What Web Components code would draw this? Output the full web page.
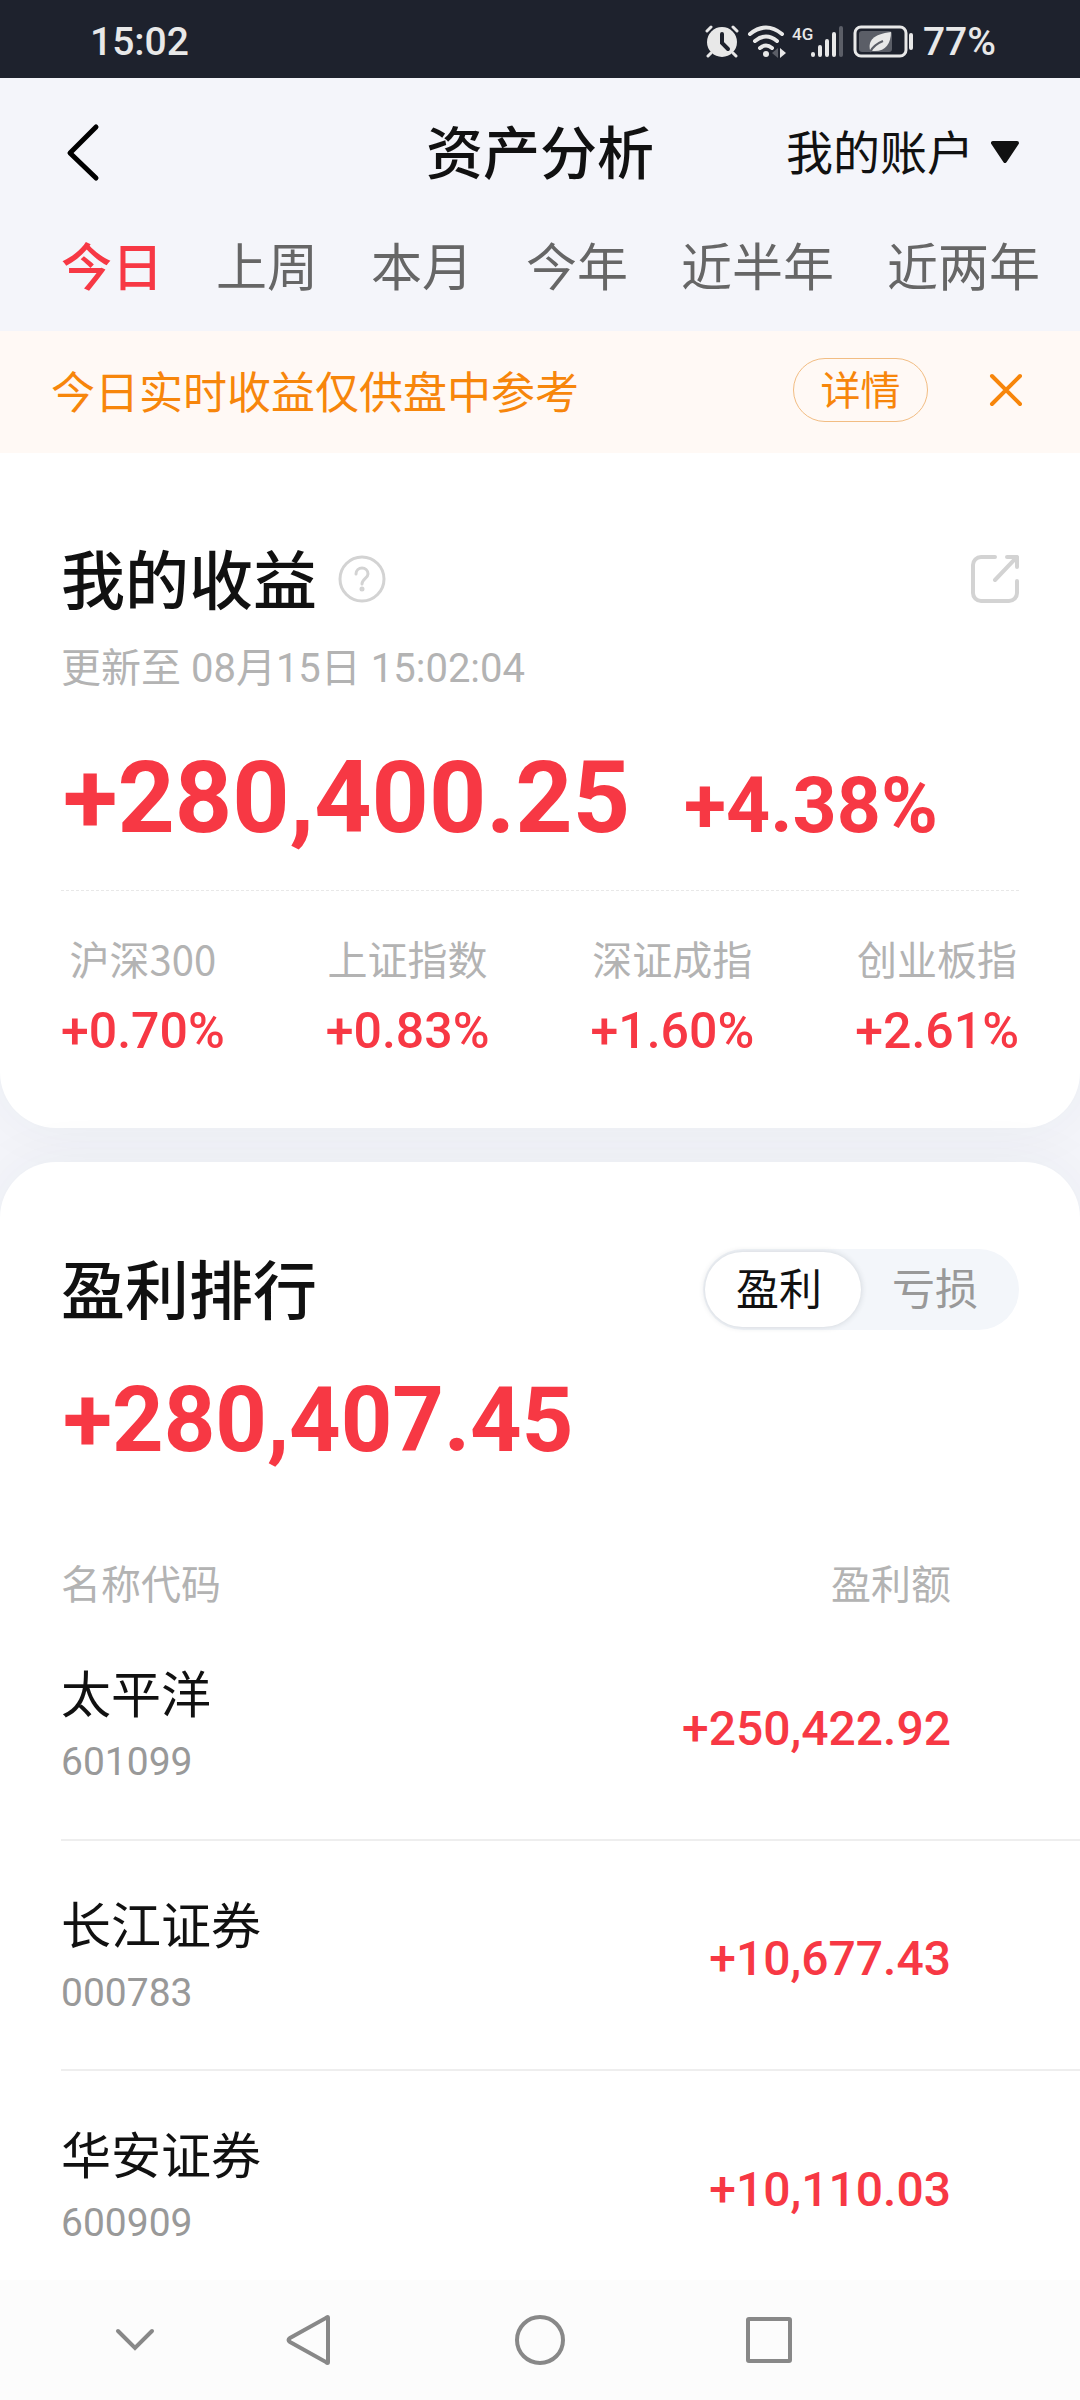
<!DOCTYPE html>
<html lang="zh-CN">
<head>
  <meta charset="utf-8">
  <meta name="viewport" content="width=device-width, initial-scale=1">
  <title>资产分析</title>
  <style>
    :root {
      --page: #f4f5fa;
      --ink: #111;
      --muted: #666;
      --light: #b3b3b3;
      --red: #f73844;
      --orange: #f7860b;
      --side: 61px;
      --num: Roboto, "Noto Sans CJK SC", sans-serif;
      --text: "Noto Sans CJK SC", sans-serif;
    }
    body {
      margin: 0;
      background: var(--page);
      color: var(--ink);
      font-family: var(--text);
    }
  </style>
</head>
<body>
  <asset-page></asset-page>

  <script>
    class StatusBar extends HTMLElement {
      constructor() {
        super();
        this.attachShadow({ mode: 'open' });
      }

      connectedCallback() {
        this.shadowRoot.innerHTML = `
          <style>
            :host {
              display: flex;
              align-items: center;
              justify-content: space-between;
              flex: none;
              height: 78px;
              padding: 5px 84px 0 90px;
              box-sizing: border-box;
              background: #1e222d;
              color: #e8e8e8;
              font: 500 39px/48px var(--num);
            }
            .icons { display: flex; align-items: center; gap: 8px; }
            svg { display: block; }
          </style>
          <span>${this.getAttribute('time')}</span>
          <div class="icons">
            <svg width="140" height="34" viewBox="0 0 140 34" fill="none" stroke="#e8e8e8" stroke-linecap="round">
              <!-- alarm -->
              <circle cx="17" cy="17" r="15" fill="#e8e8e8" stroke="none"/>
              <path d="M2 6l4-4M32 6l-4-4M6 28l-3 3M28 28l3 3" stroke-width="3"/>
              <path d="M17 9v9l6 6" stroke="#1e222d" stroke-width="4"/>
              <!-- wifi -->
              <path d="M45 9q16-13 32 0M50 16q11-9 22 0M55 23q6-5 12 0" stroke-width="4"/>
              <circle cx="61" cy="29" r="3" fill="#e8e8e8" stroke="none"/>
              <path d="M75 23l6 5-6 5z" fill="#e8e8e8" stroke="none"/>
              <path d="M73 23l-6 5 6 5z" fill="#5b5e67" stroke="none"/>
              <!-- signal bars -->
              <path d="M108 29v1M115 22v8M122 16v14M129 9v21" stroke-width="4"/>
              <path d="M136 3v27" stroke="#5b5e67" stroke-width="4"/>
              <text x="87" y="15" fill="#e8e8e8" stroke="none" font-family="Roboto, sans-serif" font-size="17" font-weight="500">4G</text>
            </svg>
            <svg width="62" height="34" viewBox="0 0 62 34" fill="none">
              <rect x="2" y="2" width="51" height="29" rx="6" stroke="#e8e8e8" stroke-width="3"/>
              <rect x="6" y="6" width="33" height="21" rx="3" fill="#5b5e67"/>
              <path d="M17 25c-2-9 3-16 21-18c0 12-6 20-18 19z" fill="#e8e8e8"/>
              <path d="M17 27c3-6 8-9 13-11" stroke="#5b5e67" stroke-width="2"/>
              <path d="M58 10v13" stroke="#e8e8e8" stroke-width="4" stroke-linecap="round"/>
            </svg>
            <span>${this.getAttribute('battery')}</span>
          </div>
        `;
      }
    }

    class PageHeader extends HTMLElement {
      constructor() {
        super();
        this.attachShadow({ mode: 'open' });
      }

      connectedCallback() {
        this.shadowRoot.innerHTML = `
          <style>
            :host {
              display: grid;
              grid-template-columns: 1fr auto 1fr;
              align-items: center;
              height: 148px;
              padding: 0 var(--side);
              flex: none;
            }
            button { justify-self: start; border: 0; padding: 0 5px; background: none; }
            svg { display: block; }
            h1 { margin: 0 0 6px; font-size: 57px; line-height: 80px; font-weight: 500; }
            label { justify-self: end; display: flex; align-items: center; gap: 17px; }
            select {
              appearance: none;
              border: 0;
              padding: 0;
              margin-bottom: 4px;
              background: none;
              color: var(--ink);
              font: 400 47px/64px var(--text);
            }
          </style>
          <button aria-label="返回">
            <svg width="36" height="60" viewBox="0 0 36 60" fill="none" stroke="#000" stroke-width="5" stroke-linecap="round" stroke-linejoin="round">
              <path d="M30 5L4 31l26 25"/>
            </svg>
          </button>
          <h1><slot></slot></h1>
          <label>
            <select aria-label="账户"><option>我的账户</option></select>
            <svg width="28" height="22" viewBox="0 0 28 22" fill="#111" stroke="#111" stroke-width="4" stroke-linejoin="round">
              <path d="M2 2h24L14 20z"/>
            </svg>
          </label>
        `;
      }
    }

    class PeriodTabs extends HTMLElement {
      constructor() {
        super();
        this.attachShadow({ mode: 'open' });
      }

      connectedCallback() {
        const periods = ['今日', '上周', '本月', '今年', '近半年', '近两年'];
        this.shadowRoot.innerHTML = `
          <style>
            :host {
              display: flex;
              gap: 53px;
              flex: none;
              padding: 2px 0 31px var(--side);
              overflow: hidden;
            }
            button {
              flex: none;
              border: 0;
              padding: 0;
              background: none;
              color: var(--muted);
              font: 400 51px/72px var(--text);
            }
            button[aria-selected="true"] { color: var(--red); font-weight: 500; }
          </style>
          ${periods.map((p, i) => `<button role="tab" aria-selected="${i === 0}">${p}</button>`).join('')}
        `;
      }
    }

    class NoticeBar extends HTMLElement {
      constructor() {
        super();
        this.attachShadow({ mode: 'open' });
      }

      connectedCallback() {
        this.shadowRoot.innerHTML = `
          <style>
            :host {
              display: flex;
              align-items: center;
              flex: none;
              height: 118px;
              padding: 0 57px 4px 51px;
              background: #fff9f5;
              color: var(--orange);
              font-size: 44px;
              line-height: 60px;
            }
            span { flex: 1; }
            button { border: 0; padding: 0; background: none; color: inherit; }
            .detail {
              width: 135px;
              height: 64px;
              margin-right: 61px;
              padding-bottom: 4px;
              border: 1px solid #f2bd83;
              border-radius: 32px;
              font: 400 40px/56px var(--text);
            }
            svg { display: block; }
          </style>
          <span><slot></slot></span>
          <button class="detail">详情</button>
          <button aria-label="关闭">
            <svg width="34" height="34" viewBox="0 0 34 34" stroke="#f7860b" stroke-width="4" stroke-linecap="round">
              <path d="M3 3l28 28M31 3L3 31"/>
            </svg>
          </button>
        `;
      }
    }

    // White rounded panel: title row (with an actions slot) above the content
    class PanelCard extends HTMLElement {
      constructor() {
        super();
        this.attachShadow({ mode: 'open' });
      }

      connectedCallback() {
        this.shadowRoot.innerHTML = `
          <style>
            :host {
              display: block;
              background: #fff;
              border-radius: 56px;
              box-shadow: 0 0 60px rgba(40, 50, 80, .05);
            }
            header {
              display: flex;
              align-items: center;
              justify-content: space-between;
              height: 96px;
              padding: 0 var(--side);
            }
            .title { display: flex; align-items: center; gap: 21px; }
            h2 { margin: 0 0 6px; font-size: 64px; line-height: 90px; font-weight: 500; }
          </style>
          <header>
            <div class="title"><h2>${this.getAttribute('heading')}</h2><slot name="hint"></slot></div>
            <slot name="action"></slot>
          </header>
          <slot></slot>
        `;
      }
    }

    class IncomeSummary extends HTMLElement {
      constructor() {
        super();
        this.attachShadow({ mode: 'open' });
      }

      connectedCallback() {
        const indexes = [
          ['沪深300', '+0.70%'],
          ['上证指数', '+0.83%'],
          ['深证成指', '+1.60%'],
          ['创业板指', '+2.61%'],
        ];
        this.shadowRoot.innerHTML = `
          <style>
            :host { display: block; }
            panel-card { padding: 78px 0 67px; border-radius: 0 0 56px 56px; }
            button { border: 0; padding: 0; background: none; }
            svg { display: block; }
            .updated, .total { margin: 0 var(--side); }
            .updated { padding-top: 14px; color: var(--light); font: 400 40px/56px var(--num); }
            .total {
              display: flex;
              align-items: baseline;
              gap: 54px;
              padding: 41px 2px 24px;
              border-bottom: 1px dashed #e8e8e8;
              color: var(--red);
              font: 700 100px/120px var(--num);
            }
            .total span { font-size: 77px; }
            .indexes {
              display: flex;
              justify-content: space-between;
              margin: 0 var(--side);
              padding-top: 39px;
              text-align: center;
            }
            dl { margin: 0; }
            dt { color: var(--light); font-size: 40px; line-height: 56px; }
            dd { margin: 15px 0 0; color: var(--red); font: 500 50px/60px var(--num); }
          </style>
          <panel-card heading="我的收益">
            <button slot="hint" aria-label="说明">
              <svg width="48" height="48" viewBox="0 0 48 48" fill="none" stroke="#d3d3d3" stroke-width="3" stroke-linecap="round">
                <circle cx="24" cy="24" r="22"/>
                <path d="M18 19c0-8 12-8 12 0c0 4-6 5-6 10"/>
                <circle cx="24" cy="34" r="1" fill="#d3d3d3"/>
              </svg>
            </button>
            <button slot="action" aria-label="分享">
              <svg width="48" height="48" viewBox="0 0 48 48" fill="none" stroke="#d3d3d3" stroke-width="4" stroke-linecap="round" stroke-linejoin="round">
                <path d="M24 2H10a8 8 0 0 0-8 8v28a8 8 0 0 0 8 8h28a8 8 0 0 0 8-8V26"/>
                <path d="M36 2h10v10M46 2L24 25"/>
              </svg>
            </button>
            <div class="updated">更新至 08月15日 15:02:04</div>
            <div class="total">+280,400.25<span>+4.38%</span></div>
            <div class="indexes">
              ${indexes.map(([name, value]) => `<dl><dt>${name}</dt><dd>${value}</dd></dl>`).join('')}
            </div>
          </panel-card>
        `;
      }
    }

    class SegmentSwitch extends HTMLElement {
      constructor() {
        super();
        this.attachShadow({ mode: 'open' });
      }

      connectedCallback() {
        const [first, second] = this.getAttribute('options').split(',');
        this.shadowRoot.innerHTML = `
          <style>
            :host {
              display: flex;
              padding: 3px 2px;
              border-radius: 41px;
              background: #f3f6fa;
            }
            button {
              width: 156px;
              height: 75px;
              border: 0;
              padding: 0 8px 6px 0;
              border-radius: 38px;
              background: none;
              color: #999;
              font: 400 43px/60px var(--text);
            }
            button[aria-pressed="true"] {
              background: #fff;
              color: var(--ink);
              box-shadow: 0 0 6px rgba(40, 50, 60, .18);
            }
          </style>
          <button aria-pressed="true">${first}</button>
          <button aria-pressed="false">${second}</button>
        `;
      }
    }

    class ProfitRanking extends HTMLElement {
      constructor() {
        super();
        this.attachShadow({ mode: 'open' });
      }

      connectedCallback() {
        const stocks = [
          { name: '太平洋', code: '601099', profit: '+250,422.92' },
          { name: '长江证券', code: '000783', profit: '+10,677.43' },
          { name: '华安证券', code: '600909', profit: '+10,110.03' },
        ];
        this.shadowRoot.innerHTML = `
          <style>
            :host { display: block; margin-top: 34px; }
            panel-card { padding-top: 79px; border-radius: 56px 56px 0 0; }
            .total {
              margin: 0 var(--side);
              padding: 30px 2px 79px;
              color: var(--red);
              font: 700 90px/108px var(--num);
            }
            table { width: calc(100% - var(--side)); margin-left: var(--side); border-collapse: collapse; }
            th, td { padding: 0; text-align: left; font-weight: 400; }
            thead th { color: var(--light); font-size: 40px; line-height: 56px; }
            tbody tr + tr { border-top: 2px solid #eee; }
            tbody td { box-sizing: border-box; height: 230px; padding-bottom: 4px; }
            th:last-child, td:last-child { padding-right: 129px; text-align: right; }
            .name { font-size: 50px; line-height: 72px; }
            .code { margin-top: 7px; color: #999; font: 400 39px/56px var(--num); }
            td.profit { padding-top: 8px; padding-bottom: 0; color: var(--red); font: 500 48px/60px var(--num); }
          </style>
          <panel-card heading="盈利排行">
            <segment-switch slot="action" options="盈利,亏损"></segment-switch>
            <div class="total">+280,407.45</div>
            <table>
              <thead><tr><th>名称代码</th><th>盈利额</th></tr></thead>
              <tbody>
                ${stocks.map((s) => `
                  <tr>
                    <td><div class="name">${s.name}</div><div class="code">${s.code}</div></td>
                    <td class="profit">${s.profit}</td>
                  </tr>
                `).join('')}
              </tbody>
            </table>
          </panel-card>
        `;
      }
    }

    class SystemNav extends HTMLElement {
      constructor() {
        super();
        this.attachShadow({ mode: 'open' });
      }

      connectedCallback() {
        this.shadowRoot.innerHTML = `
          <style>
            :host {
              display: grid;
              grid-template-columns: 168fr 232fr 229fr 337fr;
              align-items: center;
              justify-items: start;
              flex: none;
              height: 120px;
              padding-left: 114px;
              background: #fcfcfc;
            }
            button { border: 0; padding: 0; background: none; }
            svg { display: block; fill: none; stroke: #888; stroke-width: 4; stroke-linecap: round; }
          </style>
          <button aria-label="收起">
            <svg width="42" height="26" viewBox="0 0 42 26"><path d="M4 4l17 17L38 4"/></svg>
          </button>
          <button aria-label="返回">
            <svg width="52" height="52" viewBox="0 0 52 52"><path d="M46 4v44q0 2-2 0L8 28q-3-2 0-4L44 4q2-2 2 0z"/></svg>
          </button>
          <button aria-label="主页">
            <svg width="52" height="52" viewBox="0 0 52 52"><circle cx="26" cy="26" r="23"/></svg>
          </button>
          <button aria-label="多任务">
            <svg width="52" height="52" viewBox="0 0 52 52"><rect x="5" y="5" width="42" height="42" rx="1"/></svg>
          </button>
        `;
      }
    }

    class AssetPage extends HTMLElement {
      constructor() {
        super();
        this.attachShadow({ mode: 'open' });
      }

      connectedCallback() {
        this.shadowRoot.innerHTML = `
          <style>
            :host { display: flex; flex-direction: column; height: 100vh; }
            main { flex: 1; min-height: 0; overflow-y: auto; scrollbar-width: none; }
          </style>
          <status-bar time="15:02" battery="77%"></status-bar>
          <page-header>资产分析</page-header>
          <period-tabs role="tablist"></period-tabs>
          <notice-bar>今日实时收益仅供盘中参考</notice-bar>
          <main>
            <income-summary></income-summary>
            <profit-ranking></profit-ranking>
          </main>
          <system-nav></system-nav>
        `;
      }
    }

    customElements.define('status-bar', StatusBar);
    customElements.define('page-header', PageHeader);
    customElements.define('period-tabs', PeriodTabs);
    customElements.define('notice-bar', NoticeBar);
    customElements.define('panel-card', PanelCard);
    customElements.define('income-summary', IncomeSummary);
    customElements.define('segment-switch', SegmentSwitch);
    customElements.define('profit-ranking', ProfitRanking);
    customElements.define('system-nav', SystemNav);
    customElements.define('asset-page', AssetPage);
  </script>
</body>
</html>
